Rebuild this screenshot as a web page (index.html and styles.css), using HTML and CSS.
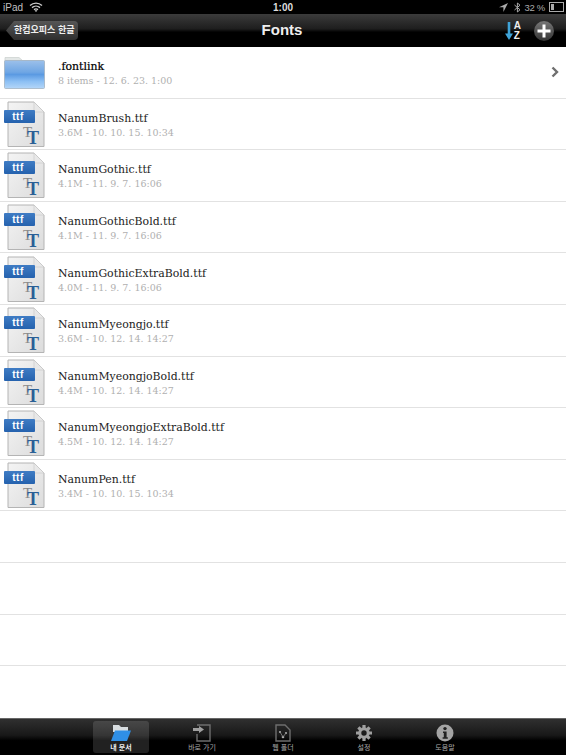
FILE: index.html
```html
<!DOCTYPE html>
<html lang="en">
<head>
  <meta charset="UTF-8" />
  <meta name="viewport" content="width=device-width, initial-scale=1.0" />
  <title>Fonts</title>
  <link rel="stylesheet" href="styles.css">
</head>
<body>
  <svg class="defs" width="0" height="0">
    <defs>
      <linearGradient id="folderBody" x1="0" y1="0" x2="0" y2="1">
        <stop offset="0" stop-color="#9cc0ea" />
        <stop offset="0.42" stop-color="#6fa6e4" />
        <stop offset="0.5" stop-color="#5b9ae2" />
        <stop offset="0.75" stop-color="#8dc0f4" />
        <stop offset="1" stop-color="#b4d6f8" />
      </linearGradient>
      <linearGradient id="pageBody" x1="0" y1="0" x2="1" y2="1">
        <stop offset="0" stop-color="#f4f4f4" />
        <stop offset="1" stop-color="#dcdcdc" />
      </linearGradient>
      <linearGradient id="tagBody" x1="0" y1="0" x2="0" y2="1">
        <stop offset="0" stop-color="#3f7cc4" />
        <stop offset="1" stop-color="#2562ae" />
      </linearGradient>
      <symbol id="ttf" viewBox="0 0 46 48">
        <path d="M6 2H32L42 12V46.5H6Z" fill="url(#pageBody)" stroke="#b4b4b4" />
        <path d="M32 2V12H42Z" fill="#e8e8e8" stroke="#c8c8c8" stroke-width="0.6" />
        <rect x="2" y="10" width="31" height="13" rx="1" fill="url(#tagBody)" />
        <text x="16" y="20" class="tag-text">ttf</text>
        <text x="21" y="37" class="t-back">T</text>
        <text x="25" y="44" class="t-front">T</text>
      </symbol>
    </defs>
  </svg>

  <!-- Status bar -->
  <div class="status">
    <div class="status-left">
      <span>iPad</span>
      <svg width="14" height="10" viewBox="0 0 14 10">
        <path d="M1 3.5C4.5 0.3 9.5 0.3 13 3.5M3 5.6C5.3 3.6 8.7 3.6 11 5.6M5 7.6C6.1 6.8 7.9 6.8 9 7.6" fill="none" stroke="#ccc" stroke-width="1.4" />
        <path d="M7 10L5.6 8.6C6.4 8 7.6 8 8.4 8.6Z" fill="#ccc" />
      </svg>
    </div>
    <div class="status-time">1:00</div>
    <div class="status-right">
      <svg class="status-arrow" width="9" height="9" viewBox="0 0 9 9"><path d="M9 0L0 4.2H4.4V9Z" fill="#aaa" /></svg>
      <svg width="7" height="11" viewBox="0 0 7 11"><path d="M0.5 3L6 7.8L3.4 10V1L6 3.2L0.5 8" fill="none" stroke="#aaa" /></svg>
      <span class="battery-text">32 %</span>
      <span class="battery"><span class="battery-fill"></span></span>
    </div>
  </div>

  <!-- Navigation -->
  <header class="navbar">
    <a class="back">한컴오피스 한글</a>
    <h1>Fonts</h1>
    <div class="nav-actions">
      <div class="sort">
        <svg width="8" height="18" viewBox="0 0 8 18"><path d="M4 0V15" stroke="#3fa3d8" stroke-width="2.6" /><path d="M0 11.5H8L4 18Z" fill="#3fa3d8" /></svg>
        <div class="sort-letters"><span>A</span><span>Z</span></div>
      </div>
      <div class="add">
        <svg width="14" height="14" viewBox="0 0 14 14"><path d="M7 0.5V13.5M0.5 7H13.5" stroke="#fff" stroke-width="3" /></svg>
      </div>
    </div>
  </header>

  <!-- File list -->
  <main class="list">
    <div class="row">
      <svg class="icon" width="46" height="48" viewBox="0 0 46 48">
        <path d="M3 11V9.5H17L20.5 12.5H41V14H3Z" fill="#e3e7e6" stroke="#c9cfcd" stroke-width="0.7" />
        <rect x="2.5" y="12.5" width="40" height="28" rx="1" fill="url(#folderBody)" stroke="#a2b2c2" stroke-width="0.8" />
      </svg>
      <div class="info">
        <div class="name name-folder">.fontlink</div>
        <div class="meta">8 items - 12. 6. 23. 1:00</div>
      </div>
      <svg class="chevron" width="8" height="12" viewBox="0 0 8 12"><path d="M1.5 1.5L6 6L1.5 10.5" fill="none" stroke="#6f6f6f" stroke-width="2.4" /></svg>
    </div>
    <div class="row">
      <svg class="icon" width="46" height="48"><use href="#ttf" /></svg>
      <div class="info"><div class="name">NanumBrush.ttf</div><div class="meta">3.6M - 10. 10. 15. 10:34</div></div>
    </div>
    <div class="row">
      <svg class="icon" width="46" height="48"><use href="#ttf" /></svg>
      <div class="info"><div class="name">NanumGothic.ttf</div><div class="meta">4.1M - 11. 9. 7. 16:06</div></div>
    </div>
    <div class="row">
      <svg class="icon" width="46" height="48"><use href="#ttf" /></svg>
      <div class="info"><div class="name">NanumGothicBold.ttf</div><div class="meta">4.1M - 11. 9. 7. 16:06</div></div>
    </div>
    <div class="row">
      <svg class="icon" width="46" height="48"><use href="#ttf" /></svg>
      <div class="info"><div class="name">NanumGothicExtraBold.ttf</div><div class="meta">4.0M - 11. 9. 7. 16:06</div></div>
    </div>
    <div class="row">
      <svg class="icon" width="46" height="48"><use href="#ttf" /></svg>
      <div class="info"><div class="name">NanumMyeongjo.ttf</div><div class="meta">3.6M - 10. 12. 14. 14:27</div></div>
    </div>
    <div class="row">
      <svg class="icon" width="46" height="48"><use href="#ttf" /></svg>
      <div class="info"><div class="name">NanumMyeongjoBold.ttf</div><div class="meta">4.4M - 10. 12. 14. 14:27</div></div>
    </div>
    <div class="row">
      <svg class="icon" width="46" height="48"><use href="#ttf" /></svg>
      <div class="info"><div class="name">NanumMyeongjoExtraBold.ttf</div><div class="meta">4.5M - 10. 12. 14. 14:27</div></div>
    </div>
    <div class="row">
      <svg class="icon" width="46" height="48"><use href="#ttf" /></svg>
      <div class="info"><div class="name">NanumPen.ttf</div><div class="meta">3.4M - 10. 10. 15. 10:34</div></div>
    </div>
    <div class="row"></div>
    <div class="row"></div>
    <div class="row"></div>
  </main>

  <!-- Tab bar -->
  <footer class="tabbar">
    <div class="tab tab-active">
      <svg width="20" height="18" viewBox="0 0 20 18">
        <path d="M2 1H8L10 3H17V8H2Z" fill="#d8dde0" />
        <path d="M4 6.5H20L16 17H0Z" fill="#2f8fe6" />
      </svg>
      <span>내 문서</span>
    </div>
    <div class="tab">
      <svg width="20" height="18" viewBox="0 0 20 18">
        <path d="M5 1H18V17H5V10" fill="none" stroke="#6e6e6e" stroke-width="1.4" />
        <path d="M1 4H7V2L12 5.5L7 9V7H1Z" fill="#a0a0a0" />
      </svg>
      <span>바로 가기</span>
    </div>
    <div class="tab">
      <svg width="16" height="18" viewBox="0 0 16 18">
        <path d="M1 1H10L15 6V17H1Z" fill="none" stroke="#6e6e6e" stroke-width="1.4" />
        <circle cx="5" cy="8" r="1.1" fill="#aaa" /><circle cx="11" cy="9" r="1.1" fill="#aaa" /><circle cx="8" cy="13" r="1.3" fill="#aaa" />
        <path d="M5 8L8 13L11 9" fill="none" stroke="#888" stroke-width="0.8" />
      </svg>
      <span>웹 폴더</span>
    </div>
    <div class="tab">
      <svg width="18" height="18" viewBox="0 0 18 18">
        <path d="M9 1V4M9 14V17M1 9H4M14 9H17M3.4 3.4L5.5 5.5M12.5 12.5L14.6 14.6M3.4 14.6L5.5 12.5M12.5 5.5L14.6 3.4" stroke="#a0a0a0" stroke-width="3.2" />
        <circle cx="9" cy="9" r="4.2" fill="none" stroke="#a0a0a0" stroke-width="3" />
      </svg>
      <span>설정</span>
    </div>
    <div class="tab">
      <svg width="18" height="18" viewBox="0 0 18 18">
        <circle cx="9" cy="9" r="8.5" fill="#a4a4a4" />
        <circle cx="9" cy="4.6" r="1.7" fill="#222" />
        <path d="M7 7.4H10.6V13.2H11.8V14.8H6.6V13.2H7.8V9H7Z" fill="#222" />
      </svg>
      <span>도움말</span>
    </div>
  </footer>
</body>
</html>
```

FILE: styles.css
```css
body {
  margin: 0;
  width: 566px;
  height: 755px;
  overflow: hidden;
  display: flex;
  flex-direction: column;
  background: #fff;
  font-family: "Liberation Sans", "Noto Sans CJK KR", sans-serif;
}
.defs {
  position: absolute;
}
/* Status bar */
.status {
  height: 14px;
  flex: none;
  background: #000;
  color: #c0c0c0;
  font-size: 10px;
  display: grid;
  grid-template-columns: 1fr auto 1fr;
  align-items: center;
  padding: 0 3px;
}
.status-left {
  display: flex;
  align-items: center;
  gap: 6px;
}
.status-time {
  font-weight: bold;
  color: #ddd;
}
.status-right {
  display: flex;
  align-items: center;
  justify-content: flex-end;
  gap: 4px;
}
.status-arrow {
  margin-right: 2px;
}
.battery-text {
  font-size: 9.5px;
  letter-spacing: -0.3px;
  color: #aaa;
}
.battery {
  width: 11px;
  height: 6px;
  border: 1px solid #aaa;
  padding: 1px;
  display: block;
  margin-right: -1px;
}
.battery-fill {
  display: block;
  width: 30%;
  height: 100%;
  background: #aaa;
}
/* Navigation */
.navbar {
  height: 33px;
  flex: none;
  position: relative;
  display: flex;
  align-items: center;
  justify-content: space-between;
  padding: 0 12px 0 6px;
  background: linear-gradient(#3b3b3b, #1e1e1e 45%, #000 55%, #000);
}
.navbar h1 {
  position: absolute;
  left: 0;
  right: 2px;
  margin: 0 0 2px;
  text-align: center;
  color: #eee;
  font-size: 15px;
  font-weight: bold;
}
.back {
  position: relative;
  z-index: 1;
  height: 19px;
  line-height: 19px;
  padding: 0 4px 0 8px;
  color: #eee;
  font-size: 9px;
  font-weight: bold;
  background: linear-gradient(#565656, #2e2e2e);
  border-radius: 4px;
  clip-path: polygon(0 50%, 8px 0, 100% 0, 100% 100%, 8px 100%);
}
.nav-actions {
  position: relative;
  z-index: 1;
  display: flex;
  align-items: center;
  gap: 13px;
}
.sort {
  display: flex;
  align-items: center;
  gap: 1px;
}
.sort-letters {
  display: flex;
  flex-direction: column;
  color: #eee;
  font-size: 10px;
  font-weight: bold;
  line-height: 10px;
}
.add {
  width: 20px;
  height: 20px;
  border-radius: 50%;
  background: linear-gradient(#777, #333);
  display: flex;
  align-items: center;
  justify-content: center;
}
/* File list */
.list {
  flex: 1;
  overflow: hidden;
}
.row {
  box-sizing: border-box;
  height: 51.6px;
  border-bottom: 1px solid #e2e2e2;
  display: flex;
  align-items: center;
  padding-right: 7px;
}
.icon {
  flex: none;
  margin: 0 8px 0 2px;
}
.info {
  flex: 1;
  padding: 4px 0 0 2px;
}
.name {
  font-family: "DejaVu Serif", "Liberation Serif", serif;
  font-size: 10.9px;
  line-height: 14px;
  color: #222;
}
.name-folder {
  color: #000;
  -webkit-text-stroke: 0.2px #000;
}
.meta {
  font-family: "DejaVu Serif", "Liberation Serif", serif;
  font-size: 9.5px;
  line-height: 14px;
  color: #b0b0b0;
}
.tag-text {
  font-family: "Liberation Sans", sans-serif;
  font-size: 10px;
  font-weight: bold;
  fill: #fff;
  text-anchor: middle;
  letter-spacing: 0.5px;
}
.t-back {
  font-family: "Liberation Serif", serif;
  font-size: 15px;
  fill: #8a8a8a;
}
.t-front {
  font-family: "Liberation Serif", serif;
  font-size: 18px;
  font-weight: bold;
  fill: #2a5f96;
}
/* Tab bar */
.tabbar {
  box-sizing: border-box;
  height: 37px;
  flex: none;
  display: flex;
  padding: 2px 0 2px 93px;
  gap: 25px;
  background: linear-gradient(#303030, #181818 45%, #000 60%);
  border-top: 1px solid #666;
}
.tab {
  box-sizing: border-box;
  width: 56px;
  display: flex;
  flex-direction: column;
  align-items: center;
  gap: 2px;
  padding-top: 3px;
  color: #aaa;
  font-size: 7px;
  line-height: 8px;
}
.tab-active {
  color: #eee;
  font-weight: bold;
  background: rgba(255, 255, 255, 0.13);
  border-radius: 3px;
}
```
